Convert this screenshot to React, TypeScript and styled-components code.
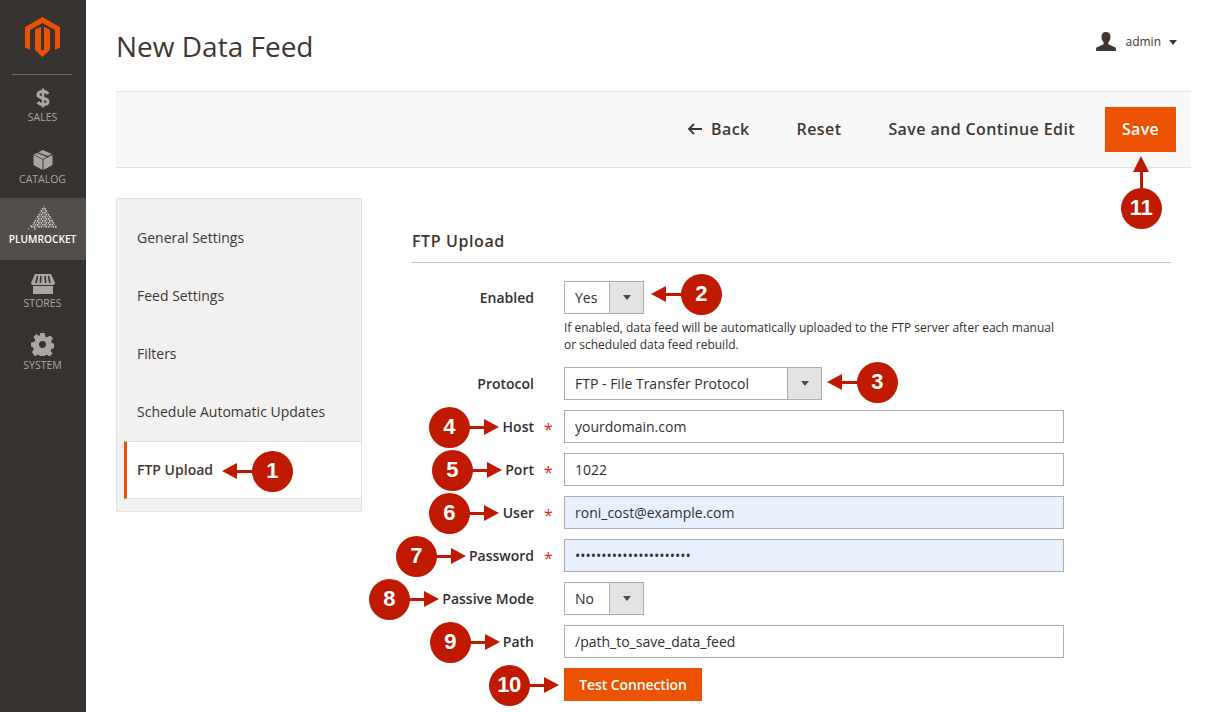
import React from 'react';
import styled, { createGlobalStyle } from 'styled-components';

const GlobalStyle = createGlobalStyle`
  html, body {
    margin: 0;
    padding: 0;
    background: #fff;
    font-family: "Open Sans", "Liberation Sans", sans-serif;
    color: #41362f;
  }
  * { box-sizing: border-box; }
`;

const MagentoLogo = () => (
  <svg width="35" height="40" viewBox="0 0 35 40" fill="#eb5202">
    <path d="M17.500 0 35 10.200v20l-5 2.800V13.100L17.500 5.900 5 13.100V33L0 30.200v-20z" />
    <path d="M16 9.800v22.800l1.500.9 1.500-.9V9.800l6 3v20L17.500 40 10 32.800v-20z" />
  </svg>
);

const DollarIcon = () => (
  <svg width="14" height="20" viewBox="0 0 14 20" fill="none" stroke="#aaa6a0">
    <path strokeWidth="3" d="M12 6C11 4 9.500 3.500 7 3.500 4 3.500 2 4.800 2 6.800 2 9 4 9.600 7 10.200c3 .6 5 1.200 5 3.200 0 2-2 3.100-5 3.100-2.500 0-4-.7-5-2.500" />
    <path strokeWidth="2.500" d="M7 .5v19" />
  </svg>
);

const CubeIcon = () => (
  <svg width="20" height="20" viewBox="0 0 20 20" fill="#aaa6a0">
    <path d="M10.500 9.600 19.500 5v10l-9 5zM9.500 9.600V20l-9-5V5z" />
    <path d="M5 2.400 9.600 0l9.400 4-4 2zM3.800 3 13.800 7 10 9 .8 4.600z" />
  </svg>
);

const StoreIcon = () => (
  <svg width="24" height="20" viewBox="0 0 24 20" fill="#aaa6a0">
    <path d="M4 0h16l4 9-1 2H1L0 9z" />
    <path d="M2 12h20v8H2z" />
    <path d="M6.500 2 5 9M10 2l-.7 7M14 2l.7 7M17.500 2 19 9" stroke="#373330" strokeWidth="1.600" />
  </svg>
);

const GearIcon = () => (
  <svg width="23" height="23" viewBox="0 0 24 24" fill="#aaa6a0">
    <path
      fillRule="evenodd"
      d="M9.800 0h4.400l.7 3.600 2 .9 3-2 3.100 3.100-2 3 .9 2 3.100.7v4.400l-3.600.7-.9 2 2 3-3.100 3.100-3-2-2 .9-.7 3.600H9.800l-.7-3.600-2-.9-3 2L1 19.900l2-3-.9-2L0 14.200V9.800l3.600-.7.900-2-2-3L5.600 1l3 2 .5-.3zM12 8.400a3.600 3.600 0 1 0 0 7.200 3.600 3.600 0 0 0 0-7.200z"
    />
  </svg>
);

const RocketIcon = () => {
  const dots: React.ReactElement[] = [];
  for (let row = 0; row < 11; row++) {
    for (let col = 0; col <= row; col++) {
      const x = 15 - row * 1.2 + col * 2.4;
      dots.push(<rect key={`${row}-${col}`} x={x} y={row * 2} width="1.6" height="1.6" fill={(row + col) % 3 === 0 ? '#8f8b86' : '#d2cfcb'} />);
    }
  }
  return (
    <svg width="30" height="24" viewBox="0 0 30 24">
      {dots}
      <rect x="2" y="19" width="1.600" height="1.600" fill="#b5b2ae" />
      <rect x="0" y="22" width="1.600" height="1.600" fill="#8f8b86" />
      <rect x="6" y="22" width="1.600" height="1.600" fill="#b5b2ae" />
    </svg>
  );
};

const UserIcon = () => (
  <svg width="20" height="20" viewBox="0 0 20 20" fill="#41362f">
    <path d="M10 0c2.900 0 4.500 1.900 4.500 4.700 0 2.300-.9 4.500-2.100 5.600v2l7.500 3.400V19H.1v-3.300l7.500-3.400v-2C6.400 9.200 5.500 7 5.500 4.700 5.500 1.900 7.100 0 10 0z" />
  </svg>
);

const BackIcon = () => (
  <svg width="15" height="12" viewBox="0 0 15 12" fill="none" stroke="#41362f" strokeWidth="1.800">
    <path d="M15 6H2M7 1 2 6l5 5" />
  </svg>
);

const Callout = ({ n, x, y, dir, len = 36 }: { n: number; x: number; y: number; dir: 'left' | 'right' | 'up'; len?: number }) => (
  <Marker $x={x} $y={y}>
    <Arrow $dir={dir} $len={len} />
    <Badge>{n}</Badge>
  </Marker>
);

export default function App() {
  const navItems = [
    { label: 'Sales', icon: <DollarIcon /> },
    { label: 'Catalog', icon: <CubeIcon /> },
    { label: 'Plumrocket', icon: <RocketIcon />, active: true },
    { label: 'Stores', icon: <StoreIcon /> },
    { label: 'System', icon: <GearIcon /> },
  ];

  return (
    <Page>
      <GlobalStyle />
      <Sidebar>
        <LogoBox>
          <MagentoLogo />
        </LogoBox>
        {navItems.map((item) => (
          <NavItem key={item.label} $active={item.active}>
            <NavIcon>{item.icon}</NavIcon>
            <NavLabel $active={item.active}>{item.label}</NavLabel>
          </NavItem>
        ))}
      </Sidebar>
      <Main>
        <Header>
          <Title>New Data Feed</Title>
          <UserBox>
            <UserIcon />
            <span>admin</span>
            <Caret />
          </UserBox>
        </Header>
        <ActionBar>
          <BackLink>
            <BackIcon />
            Back
          </BackLink>
          <ActionLink>Reset</ActionLink>
          <ActionLink>Save and Continue Edit</ActionLink>
          <SaveButton>Save</SaveButton>
        </ActionBar>
        <Content>
          <Tabs>
            <Tab>General Settings</Tab>
            <Tab>Feed Settings</Tab>
            <Tab>Filters</Tab>
            <Tab>Schedule Automatic Updates</Tab>
            <Tab $active>FTP Upload</Tab>
          </Tabs>
          <Form>
            <SectionTitle>FTP Upload</SectionTitle>
            <Rows>
              <Row>
                <Label>Enabled</Label>
                <Field>
                  <Select $width={80}>
                    <SelectValue>Yes</SelectValue>
                    <SelectButton><SelectCaret /></SelectButton>
                  </Select>
                  <Note>
                    If enabled, data feed will be automatically uploaded to the FTP server after each manual
                    <br />
                    or scheduled data feed rebuild.
                  </Note>
                </Field>
              </Row>
              <Row>
                <Label>Protocol</Label>
                <Field>
                  <Select $width={258}>
                    <SelectValue>FTP - File Transfer Protocol</SelectValue>
                    <SelectButton><SelectCaret /></SelectButton>
                  </Select>
                </Field>
              </Row>
              <Row>
                <Label $required>Host</Label>
                <Field><Input readOnly value="yourdomain.com" /></Field>
              </Row>
              <Row>
                <Label $required>Port</Label>
                <Field><Input readOnly value="1022" /></Field>
              </Row>
              <Row>
                <Label $required>User</Label>
                <Field><Input $filled readOnly value="roni_cost@example.com" /></Field>
              </Row>
              <Row>
                <Label $required>Password</Label>
                <Field><Input $filled readOnly type="password" value="1234567890123456789012" /></Field>
              </Row>
              <Row>
                <Label>Passive Mode</Label>
                <Field>
                  <Select $width={80}>
                    <SelectValue>No</SelectValue>
                    <SelectButton><SelectCaret /></SelectButton>
                  </Select>
                </Field>
              </Row>
              <Row>
                <Label>Path</Label>
                <Field><Input readOnly value="/path_to_save_data_feed" /></Field>
              </Row>
              <Row>
                <Label />
                <Field><TestButton>Test Connection</TestButton></Field>
              </Row>
            </Rows>
          </Form>
        </Content>
      </Main>
      <Callout n={1} x={272} y={471} dir="left" />
      <Callout n={2} x={701} y={294} dir="left" />
      <Callout n={3} x={877} y={382} dir="left" />
      <Callout n={4} x={449} y={427} dir="right" />
      <Callout n={5} x={452} y={470} dir="right" />
      <Callout n={6} x={449} y={513} dir="right" />
      <Callout n={7} x={416} y={556} dir="right" />
      <Callout n={8} x={389} y={599} dir="right" />
      <Callout n={9} x={450} y={642} dir="right" />
      <Callout n={10} x={509} y={685} dir="right" />
      <Callout n={11} x={1141} y={208} dir="up" len={44} />
    </Page>
  );
}

const Page = styled.div`
  position: relative;
  display: flex;
  width: 1206px;
  height: 712px;
  overflow: hidden;
  background: #fff;
`;

const Sidebar = styled.nav`
  flex: 0 0 86px;
  background: #373330;
  display: flex;
  flex-direction: column;
`;

const LogoBox = styled.div`
  height: 75px;
  margin: 0 14px -1px 12px;
  padding-top: 17px;
  display: flex;
  justify-content: center;
  border-bottom: 1px solid #736e69;
`;

const NavItem = styled.div<{ $active?: boolean }>`
  height: 62px;
  display: flex;
  flex-direction: column;
  align-items: center;
  justify-content: flex-end;
  padding-right: 1px;
  padding-bottom: ${(p) => (p.$active ? 14 : 12)}px;
  background: ${(p) => (p.$active ? '#524d49' : 'transparent')};
`;

const NavIcon = styled.div`
  height: 24px;
  display: flex;
  align-items: flex-end;
  justify-content: center;
  margin-bottom: 2px;
`;

const NavLabel = styled.div<{ $active?: boolean }>`
  font-size: ${(p) => (p.$active ? 10.2 : 10.5)}px;
  line-height: 14px;
  text-transform: uppercase;
  color: ${(p) => (p.$active ? '#fff' : '#aaa6a0')};
  font-weight: ${(p) => (p.$active ? 600 : 400)};
`;

const Main = styled.main`
  flex: 1;
  padding: 0 15px 0 30px;
  display: flex;
  flex-direction: column;
`;

const Header = styled.header`
  height: 91px;
  display: flex;
  justify-content: space-between;
  align-items: flex-start;
  padding-right: 14px;
`;

const Title = styled.h1`
  margin: 27px 0 0;
  font-size: 28px;
  line-height: 38px;
  font-weight: 400;
  color: #41362f;
`;

const UserBox = styled.div`
  margin-top: 32px;
  display: flex;
  align-items: center;
  gap: 9px;
  font-size: 12px;
  line-height: 20px;
`;

const Caret = styled.i`
  width: 0;
  height: 0;
  margin-left: -1px;
  border-style: solid;
  border-width: 5px 4.5px 0;
  border-color: #41362f transparent transparent;
`;

const ActionBar = styled.div`
  height: 77px;
  display: flex;
  align-items: center;
  justify-content: flex-end;
  gap: 47px;
  padding-right: 15px;
  background: #f8f8f8;
  border-top: 1px solid #e3e3e3;
  border-bottom: 1px solid #e3e3e3;
`;

const ActionLink = styled.span`
  margin-top: -2px;
  font-size: 16px;
  font-weight: 600;
  letter-spacing: 0.4px;
  color: #41362f;
`;

const BackLink = styled(ActionLink)`
  display: flex;
  align-items: center;
  gap: 9px;
`;

const SaveButton = styled.button`
  width: 71px;
  height: 45px;
  margin-left: -17px;
  border: 0;
  padding: 0 0 2px;
  background: #eb5202;
  color: #fff;
  font-family: inherit;
  font-size: 16px;
  font-weight: 600;
  letter-spacing: 0.3px;
`;

const Content = styled.div`
  display: flex;
  padding-top: 30px;
`;

const Tabs = styled.div`
  flex: 0 0 246px;
  height: 314px;
  padding: 10px 0 13px;
  background: #f1f1f1;
  border: 1px solid #e3e3e3;
  display: flex;
  flex-direction: column;
`;

const Tab = styled.div<{ $active?: boolean }>`
  height: 58px;
  flex: 0 0 58px;
  display: flex;
  align-items: center;
  font-size: 14px;
  padding: 0 0 2px 20px;
  color: #41362f;
  ${(p) =>
    p.$active &&
    `
    margin-left: 7px;
    padding-left: 10px;
    background: #fff;
    border-left: 3px solid #eb5202;
    border-top: 1px solid #e3e3e3;
    border-bottom: 1px solid #e3e3e3;
    font-weight: 600;
  `}
`;

const Form = styled.section`
  flex: 1;
  margin-left: 50px;
  margin-right: 20px;
`;

const SectionTitle = styled.h2`
  margin: 0;
  height: 65px;
  padding-top: 31px;
  font-size: 16px;
  line-height: 24px;
  font-weight: 600;
  letter-spacing: 0.6px;
  color: #41362f;
  border-bottom: 1px solid #cac3b4;
`;

const Rows = styled.div`
  padding-top: 18px;
  display: flex;
  flex-direction: column;
  gap: 10px;
`;

const Row = styled.div`
  display: flex;
  align-items: flex-start;
`;

const Label = styled.label<{ $required?: boolean }>`
  position: relative;
  flex: 0 0 122px;
  margin-right: 30px;
  text-align: right;
  font-size: 14px;
  font-weight: 600;
  line-height: 33px;
  color: #303030;
  ${(p) =>
    p.$required &&
    `
    &::after {
      content: '*';
      position: absolute;
      left: 132px;
      top: 3px;
      color: #e22626;
      font-weight: 400;
      font-size: 16px;
    }
  `}
`;

const Field = styled.div`
  width: 500px;
`;

const Select = styled.div<{ $width: number }>`
  width: ${(p) => p.$width}px;
  height: 33px;
  display: flex;
  border: 1px solid #adadad;
  background: #fff;
`;

const SelectValue = styled.div`
  flex: 1;
  padding-left: 10px;
  font-size: 14px;
  line-height: 31px;
  color: #303030;
`;

const SelectButton = styled.div`
  flex: 0 0 34px;
  display: flex;
  align-items: center;
  justify-content: center;
  background: #e3e3e3;
  border-left: 1px solid #adadad;
`;

const SelectCaret = styled.i`
  width: 0;
  height: 0;
  border-style: solid;
  border-width: 5px 4px 0;
  border-color: #514943 transparent transparent;
`;

const Note = styled.p`
  margin: 5px 0 4px;
  font-size: 12px;
  line-height: 17px;
  color: #303030;
`;

const Input = styled.input<{ $filled?: boolean }>`
  display: block;
  width: 500px;
  height: 33px;
  border: 1px solid #adadad;
  padding: 0 10px;
  outline: none;
  font-family: inherit;
  font-size: 14px;
  color: #303030;
  background: ${(p) => (p.$filled ? '#e8f0fe' : '#fff')};
`;

const TestButton = styled.button`
  width: 138px;
  height: 33px;
  border: 0;
  padding: 0;
  background: #eb5202;
  color: #fff;
  font-family: inherit;
  font-size: 14px;
  font-weight: 600;
  letter-spacing: -0.1px;
`;

const Marker = styled.div<{ $x: number; $y: number }>`
  position: absolute;
  left: ${(p) => p.$x}px;
  top: ${(p) => p.$y}px;
  width: 0;
  height: 0;
`;

const Badge = styled.div`
  position: absolute;
  left: -20.5px;
  top: -20.5px;
  width: 41px;
  height: 41px;
  border-radius: 50%;
  background: #bf1a00;
  color: #fff;
  display: flex;
  align-items: center;
  justify-content: center;
  font-family: "Liberation Sans", Arial, sans-serif;
  font-weight: 700;
  font-size: 22px;
  letter-spacing: -0.5px;
`;

const Arrow = styled.div<{ $dir: 'left' | 'right' | 'up'; $len: number }>`
  position: absolute;
  background: #bf1a00;
  ${(p) =>
    p.$dir === 'up'
      ? `left: -1.5px; bottom: 0; width: 3px; height: ${p.$len}px;`
      : `top: -1.5px; height: 3px; width: ${p.$len}px; ${p.$dir === 'left' ? 'right: 0;' : 'left: 0;'}`}
  &::after {
    content: '';
    position: absolute;
    width: 0;
    height: 0;
    border-style: solid;
    ${(p) =>
      p.$dir === 'up'
        ? `top: -8px; left: -6.5px; border-width: 0 8px 16px; border-color: transparent transparent #bf1a00;`
        : p.$dir === 'left'
          ? `left: -14px; top: -7px; border-width: 8.5px 15px 8.5px 0; border-color: transparent #bf1a00 transparent transparent;`
          : `right: -14px; top: -7px; border-width: 8.5px 0 8.5px 15px; border-color: transparent transparent transparent #bf1a00;`}
  }
`;
